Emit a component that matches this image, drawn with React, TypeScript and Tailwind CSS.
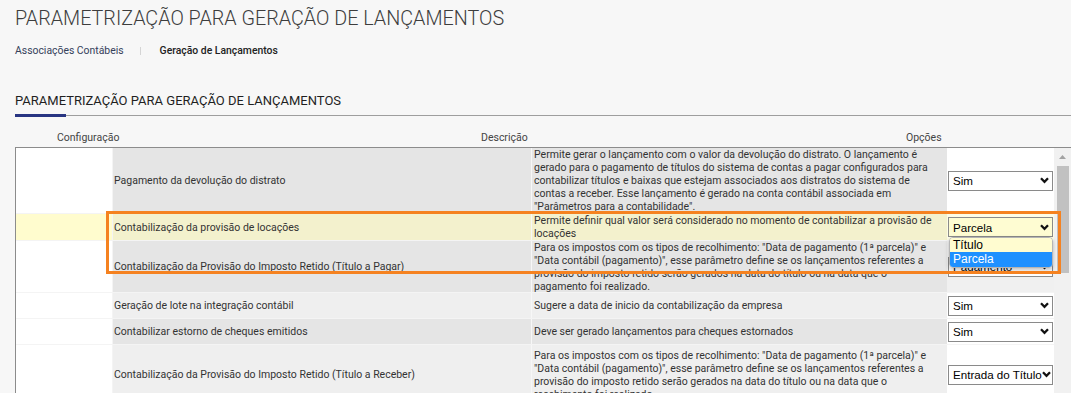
import React from 'react'

type Row = {
  name: string
  desc: string[]
  value: string
  h: string
  bg: string
  first: string
  opt: string
}

const impostoPagar = [
  'Para os impostos com os tipos de recolhimento: "Data de pagamento (1ª parcela)" e',
  '"Data contábil (pagamento)", esse parâmetro define se os lançamentos referentes a',
  'provisão do imposto retido serão gerados na data do título ou na data que o',
]

const rows: Row[] = [
  {
    name: 'Pagamento da devolução do distrato',
    desc: [
      'Permite gerar o lançamento com o valor da devolução do distrato. O lançamento é',
      'gerado para o pagamento de títulos do sistema de contas a pagar configurados para',
      'contabilizar títulos e baixas que estejam associados aos distratos do sistema de',
      'contas a receber. Esse lançamento é gerado na conta contábil associada em',
      '"Parâmetros para a contabilidade".',
    ],
    value: 'Sim',
    h: 'h-[66px]',
    bg: 'bg-[#e5e5e5]',
    first: 'bg-white',
    opt: 'bg-white',
  },
  {
    name: 'Contabilização da provisão de locações',
    desc: [
      'Permite definir qual valor será considerado no momento de contabilizar a provisão de',
      'locações',
    ],
    value: 'Parcela',
    h: 'h-[27px]',
    bg: 'bg-[#f3f1cd]',
    first: 'bg-[#fffcce]',
    opt: 'bg-[#fdfce6]',
  },
  {
    name: 'Contabilização da Provisão do Imposto Retido (Título a Pagar)',
    desc: [...impostoPagar, 'pagamento foi realizado.'],
    value: 'Pagamento',
    h: 'h-[52px]',
    bg: 'bg-[#e5e5e5]',
    first: 'bg-white',
    opt: 'bg-[#f0f0f0]',
  },
  {
    name: 'Geração de lote na integração contábil',
    desc: ['Sugere a data de inicio da contabilização da empresa'],
    value: 'Sim',
    h: 'h-[26px]',
    bg: 'bg-[#efefef]',
    first: 'bg-white',
    opt: 'bg-white',
  },
  {
    name: 'Contabilizar estorno de cheques emitidos',
    desc: ['Deve ser gerado lançamentos para cheques estornados'],
    value: 'Sim',
    h: 'h-[26px]',
    bg: 'bg-[#e5e5e5]',
    first: 'bg-white',
    opt: 'bg-white',
  },
  {
    name: 'Contabilização da Provisão do Imposto Retido (Título a Receber)',
    desc: [...impostoPagar, 'recebimento foi realizado.'],
    value: 'Entrada do Título',
    h: 'h-[60px]',
    bg: 'bg-[#efefef]',
    first: 'bg-white',
    opt: 'bg-white',
  },
]

function Chevron() {
  return (
    <svg width="9" height="7" viewBox="0 0 9 7" className="shrink-0">
      <path d="M1 1.3 L4.5 4.8 L8 1.3" fill="none" stroke="#111" strokeWidth="2.3" />
    </svg>
  )
}

function FakeSelect({ value, yellow }: { value: string; yellow?: boolean }) {
  return (
    <div
      className={`w-[105px] h-[20px] border border-[#8a8a8a] flex items-center justify-between pl-[4px] pr-[3px] text-[11.6px] text-black font-['Liberation_Sans',Arial,sans-serif] ${
        yellow ? 'bg-[#fefcd2]' : 'bg-white'
      }`}
    >
      <span className="whitespace-nowrap">{value}</span>
      <Chevron />
    </div>
  )
}

export default function App() {
  return (
    <div className="relative w-[1071px] h-[393px] overflow-hidden bg-[#f7f7f7] font-['Roboto','Noto_Sans',sans-serif] text-[#333]">
      <h1 className="pl-[15px] pt-[7px] text-[19.75px] leading-[24px] font-light text-[#3d3d3d] whitespace-nowrap">
        PARAMETRIZAÇÃO PARA GERAÇÃO DE LANÇAMENTOS
      </h1>

      <nav className="mt-[13px] pl-[15px] h-[14px] flex items-center text-[10.4px] leading-[14px]">
        <span className="text-[#34405a]">Associações Contábeis</span>
        <span className="ml-[16px] mr-[19px] w-px h-[8px] bg-[#d5d5d5]" />
        <span className="text-[#222] font-medium">Geração de Lançamentos</span>
      </nav>

      <div className="mt-[35px] pl-[15px]">
        <h2 className="text-[13px] leading-[16px] text-[#1f1f1f] whitespace-nowrap">
          PARAMETRIZAÇÃO PARA GERAÇÃO DE LANÇAMENTOS
        </h2>
        <div className="mt-[5px] flex items-center h-[3px]">
          <div className="w-[51px] h-[3px] bg-[#283582]" />
          <div className="flex-1 h-px bg-[#9e9e9e]" />
        </div>
      </div>

      <div className="mt-[14px] ml-[15px] border-b border-[#8c8c8c] pb-[2px] flex text-[10.5px] leading-[14px] text-[#444]">
        <div className="w-[466px] pl-[42px]">Configuração</div>
        <div className="w-[425px]">Descrição</div>
        <div>Opções</div>
      </div>

      <div className="ml-[15px] flex border-l border-[#8c8c8c]">
        <div className="flex flex-col">
          {rows.map((r, i) => (
            <div
              key={i}
              className={`grid grid-cols-[96px_419px_416px_107px] ${r.h} border-b border-[#f4f4f4] text-[10.5px] leading-[13px]`}
            >
              <div className={r.first} />
              <div className={`${r.bg} border-l border-[#f4f4f4] flex items-center pl-[1px] whitespace-nowrap`}>
                {r.name}
              </div>
              <div className={`${r.bg} border-l border-[#f7f7f7] pl-[2px] flex flex-col justify-center overflow-hidden`}>
                {r.desc.map((l, j) => (
                  <div key={j} className="whitespace-nowrap">
                    {l}
                  </div>
                ))}
              </div>
              <div className={`${r.opt} flex items-center pl-[1px] relative`}>
                <FakeSelect value={r.value} yellow={i === 1} />
                {i === 1 && (
                  <div className="absolute left-[2px] top-[23px] z-10 w-[104px] rounded-[4px] border border-[#b5b5b5] overflow-hidden shadow-[0_2px_4px_rgba(0,0,0,0.25)] text-[12px] leading-[14px] font-['Liberation_Sans',Arial,sans-serif]">
                    <div className="bg-[#fffcd0] text-black pl-[3px] h-[14px]">Título</div>
                    <div className="bg-[#1e90ff] text-white pl-[3px] h-[15px]">Parcela</div>
                  </div>
                )}
              </div>
            </div>
          ))}
        </div>

        <div className="w-[17px] bg-[#f1f1f1] flex flex-col items-center">
          <svg width="9" height="6" viewBox="0 0 9 6" className="mt-[6px]">
            <path d="M4.5 1 L8 5 L1 5 Z" fill="#a3a3a3" />
          </svg>
          <div className="mt-[6px] w-[12px] h-[107px] bg-[#c1c1c1]" />
        </div>
      </div>

      <div className="absolute left-[106px] top-[211px] w-[955px] h-[63px] border-[3px] border-[#f58220] pointer-events-none z-20" />
    </div>
  )
}
